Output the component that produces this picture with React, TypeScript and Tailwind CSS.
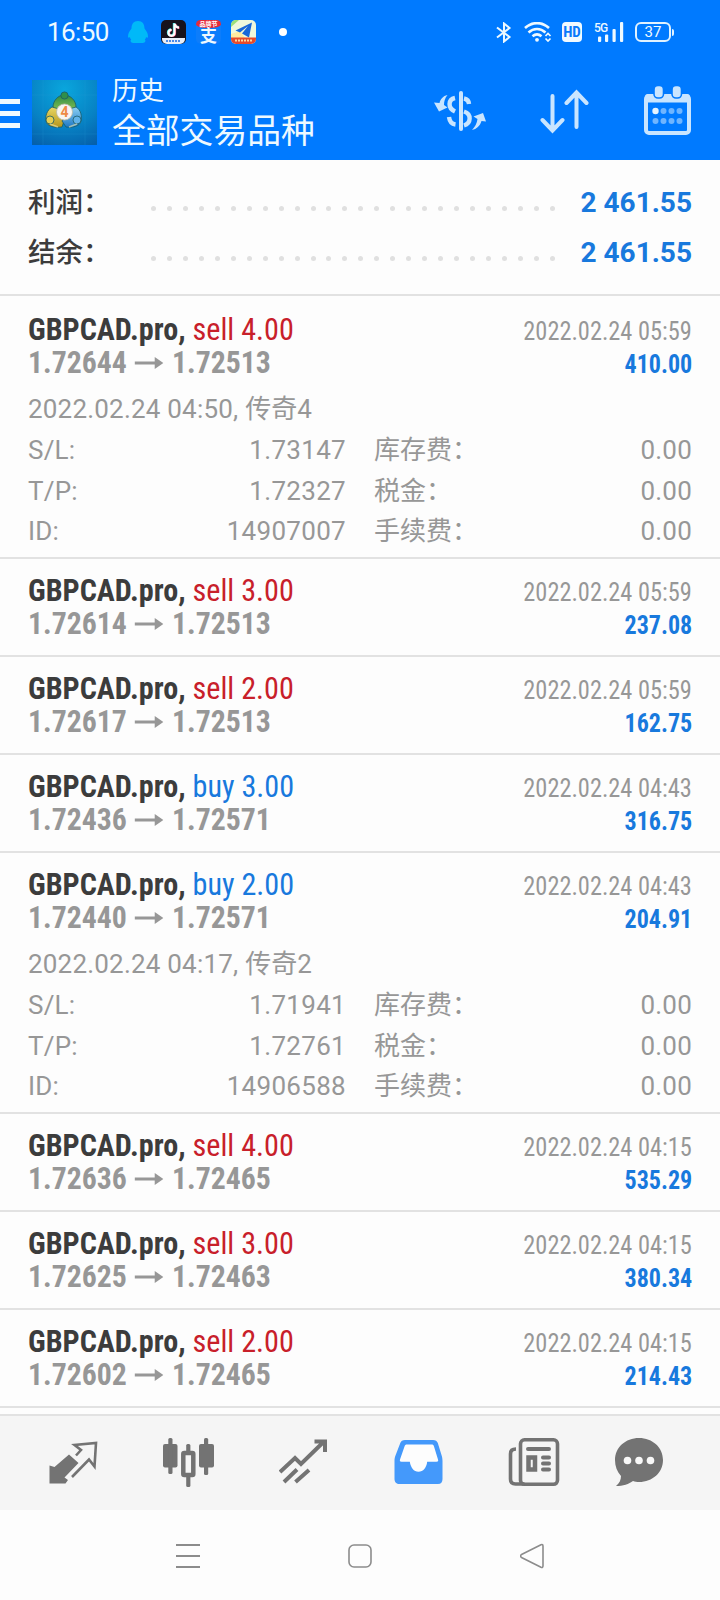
import React from "react";

interface Trade {
  side: "buy" | "sell";
  volume: string;
  open: string;
  close: string;
  time: string;
  profit: string;
  details?: {
    opened: string;
    comment: string;
    sl: string;
    tp: string;
    id: string;
  };
}

const trades: Trade[] = [
  {
    side: "sell",
    volume: "4.00",
    open: "1.72644",
    close: "1.72513",
    time: "2022.02.24 05:59",
    profit: "410.00",
    details: { opened: "2022.02.24 04:50,", comment: "传奇4", sl: "1.73147", tp: "1.72327", id: "14907007" },
  },
  { side: "sell", volume: "3.00", open: "1.72614", close: "1.72513", time: "2022.02.24 05:59", profit: "237.08" },
  { side: "sell", volume: "2.00", open: "1.72617", close: "1.72513", time: "2022.02.24 05:59", profit: "162.75" },
  { side: "buy", volume: "3.00", open: "1.72436", close: "1.72571", time: "2022.02.24 04:43", profit: "316.75" },
  {
    side: "buy",
    volume: "2.00",
    open: "1.72440",
    close: "1.72571",
    time: "2022.02.24 04:43",
    profit: "204.91",
    details: { opened: "2022.02.24 04:17,", comment: "传奇2", sl: "1.71941", tp: "1.72761", id: "14906588" },
  },
  { side: "sell", volume: "4.00", open: "1.72636", close: "1.72465", time: "2022.02.24 04:15", profit: "535.29" },
  { side: "sell", volume: "3.00", open: "1.72625", close: "1.72463", time: "2022.02.24 04:15", profit: "380.34" },
  { side: "sell", volume: "2.00", open: "1.72602", close: "1.72465", time: "2022.02.24 04:15", profit: "214.43" },
];

function StatusBar() {
  return (
    <div className="flex h-16 items-center justify-between pl-[47px] pr-[46px] text-[#eef9ff]">
      <div className="flex items-center">
        <span className="w-[81px] text-[26px] leading-8 tracking-[-0.6px]">16:50</span>
        {/* QQ */}
        <svg width="20" height="22" viewBox="0 0 20 22" className="block" fill="#00b9f8">
          <path d="M10 0C5.500 0 3.500 3 3.500 7.500C1.500 10 0 12.500 0 15.500c0 1.500 1 1.500 2 .5c0 1 .5 2 1.200 2.600c-1.200.8-.8 3.400 2 3.400h9.600c2.800 0 3.200-2.600 2-3.400c.7-.6 1.200-1.600 1.200-2.600c1 1 2 1 2-.5c0-3-1.500-5.500-3.500-8C16.500 3 14.500 0 10 0z" />
        </svg>
        {/* TikTok */}
        <svg width="25" height="24" viewBox="0 0 25 24" className="ml-[13px] block">
          <rect width="25" height="24" rx="5" fill="#17121c" />
          <path d="M1 18h23v1a5 5 0 0 1-5 5H6a5 5 0 0 1-5-5z" fill="#e8eef8" />
          <path d="M5 21h15" stroke="#4d8be8" strokeWidth="2" strokeDasharray="2 1" />
          <path d="M13 3v9.500a3 3 0 1 1-3-3M13 3.500c.5 2.500 2 3.600 4.500 3.800" fill="none" stroke="#2de6e2" strokeWidth="2.400" />
          <path d="M14 4v9a3 3 0 1 1-3-3M14 4c.5 2.500 2 3.600 4.500 3.800" fill="none" stroke="#f8406a" strokeWidth="2.200" />
          <path d="M13.500 3.500v9.300a3 3 0 1 1-3-3M13.500 3.800c.5 2.500 2 3.600 4.500 3.800" fill="none" stroke="#fff" strokeWidth="2.200" />
        </svg>
        {/* Alipay */}
        <span className="ml-[10px] flex h-6 w-[25px] flex-col items-center rounded-[5px] bg-[#0d7dfb]">
          <span className="h-[8px] w-full rounded-t-[5px] rounded-b-[50%] bg-[#e52b3c] text-center text-[6px] font-bold leading-[8px] text-white">
            品牌节
          </span>
          <span className="text-[17px] font-bold leading-[16px]">支</span>
        </span>
        {/* Maps */}
        <svg width="25" height="24" viewBox="0 0 25 24" className="ml-[10px] block">
          <rect width="25" height="24" rx="5" fill="#eef8dc" />
          <path d="M0 7L8 0H5a5 5 0 0 0-5 5z" fill="#9be07a" />
          <path d="M0 14l9-3 5 7H0z" fill="#ffe9a0" />
          <path d="M21 2.500L4.500 10.500l4.500 2L17 6l-6 7.500 7 4z" fill="#1767d8" />
          <path d="M0 17.500h25V19a5 5 0 0 1-5 5H5a5 5 0 0 1-5-5z" fill="#e54a2c" />
          <path d="M4 20.500h17" stroke="#fbd9a0" strokeWidth="2" strokeDasharray="2 1" />
        </svg>
        <span className="ml-[23px] size-2 rounded-full bg-white" />
      </div>

      <div className="flex items-center">
        <svg width="16" height="21" viewBox="0 0 16 21" className="block" fill="none" stroke="currentColor" strokeWidth="2">
          <path d="M1 5.500l12.500 9.500L8 19.500v-18L13.500 6L1 15.500" />
        </svg>
        <svg width="28" height="20" viewBox="0 0 28 20" className="ml-[12px] block" fill="none" stroke="currentColor">
          <path d="M1 6C8-.5 18-.5 25 6M4.500 10.500c5-4.700 12-4.700 17 0M8.500 14.300c3-2.600 6-2.600 9 0" strokeWidth="2.600" />
          <circle cx="13" cy="17.800" r="1.900" fill="currentColor" stroke="none" />
          <path d="M21.500 14l2.500-2.500 2.500 2.500M21.500 16.500l2.500 2.500 2.500-2.500" strokeWidth="1.700" />
        </svg>
        <span className="ml-[10px] h-5 w-5 rounded-[4px] bg-[#f2faff] text-center font-['Roboto_Condensed',Roboto,sans-serif] text-[15px] font-bold leading-5 text-[#0a79fb]">
          HD
        </span>
        <span className="relative ml-[12px] h-5 w-[30px]">
          <span className="absolute left-0 top-0 text-[12px] font-medium leading-3 tracking-[-0.8px]">5G</span>
          <svg width="30" height="20" viewBox="0 0 30 20" className="block" fill="currentColor">
            <rect x="4" y="14.500" width="3.200" height="5.500" rx="1" />
            <rect x="11" y="12.500" width="3.200" height="7.500" rx="1" />
            <rect x="18.500" y="7" width="3.200" height="13" rx="1" />
            <rect x="26" y="0" width="3.200" height="20" rx="1" />
          </svg>
        </span>
        <span className="ml-[11px] flex h-5 w-[36px] items-center justify-center rounded-[6px] border-2 border-[#e0f2ff] text-[15px] leading-4">
          37
        </span>
        <span className="ml-px h-[7px] w-[2px] rounded-r bg-[#e0f2ff]" />
      </div>
    </div>
  );
}

function AppLogo() {
  return (
    <svg width="65" height="65" viewBox="0 0 65 65" className="block">
      <defs>
        <radialGradient id="logoBg" cx="0.5" cy="0.15" r="0.95">
          <stop offset="0" stopColor="#0aa6dd" />
          <stop offset="0.6" stopColor="#0782c4" />
          <stop offset="1" stopColor="#0560ab" />
        </radialGradient>
        <linearGradient id="logoGreen" x1="0" y1="0" x2="0" y2="1">
          <stop offset="0" stopColor="#2c8a45" />
          <stop offset="1" stopColor="#8cc653" />
        </linearGradient>
        <linearGradient id="logoYellow" x1="0" y1="0" x2="0" y2="1">
          <stop offset="0" stopColor="#e8d665" />
          <stop offset="1" stopColor="#b5961c" />
        </linearGradient>
        <linearGradient id="logoBlue" x1="0" y1="0" x2="0" y2="1">
          <stop offset="0" stopColor="#8dd0f4" />
          <stop offset="1" stopColor="#1d78c4" />
        </linearGradient>
      </defs>
      <rect width="65" height="65" fill="url(#logoBg)" />
      <path d="M11 0v65M53 0v65M0 15h65M0 54h65" stroke="#2b9fd8" strokeWidth="0.700" opacity="0.300" />
      <g stroke="#1b5c66" strokeWidth="0.800">
        <path d="M32 15c-6 0-11 6-11 12l6 5h11l6-5c0-6-5-12-12-12z" fill="url(#logoGreen)" />
        <path d="M20 27c-5 3-7 9-6 14c1 5 7 7 16 6l2-6-5-12z" fill="url(#logoYellow)" />
        <path d="M44 27c5 3 6 9 5 14c-1 5-8 7-15 6l-4-6 7-12z" fill="url(#logoBlue)" />
        <circle cx="32.500" cy="15.500" r="3.600" fill="#2f8f4a" />
        <circle cx="18" cy="40" r="4" fill="#e6cf52" />
        <circle cx="45" cy="40" r="4" fill="#5fb2ea" />
      </g>
      <path d="M18 44l8 3M45 44l-8 3" stroke="#f3ebb0" strokeWidth="1.500" opacity="0.600" />
      <circle cx="32.500" cy="32" r="8" fill="#f7f5f2" stroke="#b9b9a6" strokeWidth="0.800" />
      <text x="32.500" y="37" textAnchor="middle" fontSize="14" fontWeight="700" fill="#ee8a45" fontFamily="Roboto, sans-serif">
        4
      </text>
    </svg>
  );
}

function Header() {
  return (
    <div className="flex h-24 items-start text-[#eef9ff]">
      <svg width="20" height="30" viewBox="0 0 20 30" className="mt-[35px] block" fill="currentColor">
        <rect y="0" width="20" height="5" />
        <rect y="12" width="20" height="5" />
        <rect y="24" width="20" height="5" />
      </svg>
      <div className="ml-3 mt-4">
        <AppLogo />
      </div>
      <div className="ml-[15px] mt-[9px] flex-1">
        <div className="text-[26px] leading-[36px]">历史</div>
        <div className="text-[33.8px] leading-[46px]">全部交易品种</div>
      </div>
      <div className="mr-[29px] mt-[22px] flex items-start text-[#c9e5ff]">
        <svg width="54" height="50" viewBox="0 0 54 50" className="block" fill="none" stroke="currentColor">
          <path d="M28 7v36" strokeWidth="4" strokeLinecap="round" />
          <path d="M22 12c-7 1.500-7.500 10 0 13.500M31 12.500c3 .6 4.800 2.500 5 5.500M31 25.500c8 2.500 7 12 0 14M22.500 38.500c-4-.5-6-3.500-6.500-7.500" strokeWidth="4.400" />
          <path d="M14.500 9C10 10 7.500 13 6.500 17l-5.500-.5L6 25.500l8.500-4-3.500-2.500C11 15 12 12 14.500 9z" fill="currentColor" stroke="none" />
          <path d="M39 44c4.500-1 8-4 9.500-9l4.500.5L50 27l-9.500 3.500 4 2.500C44 37 42 41 39 44z" fill="currentColor" stroke="none" />
        </svg>
        <svg width="50" height="50" viewBox="0 0 50 50" className="ml-[53px] block" fill="none" stroke="currentColor" strokeWidth="4" strokeLinecap="round">
          <path d="M12.500 10v34M2.500 34l10 10.500 10-10.500M36.500 41V7M26.500 17l10-10.500 10 10.500" />
        </svg>
        <svg width="47" height="50" viewBox="0 0 47 50" className="ml-[54px] block">
          <rect x="2" y="10" width="43" height="37" rx="3" fill="none" stroke="currentColor" strokeWidth="4" />
          <rect x="1" y="8" width="45" height="8.500" rx="3" fill="currentColor" />
          <rect x="10" y="-0.500" width="9.500" height="12.500" rx="4" fill="currentColor" stroke="#007aff" strokeWidth="1.600" />
          <rect x="28" y="-0.500" width="9.500" height="12.500" rx="4" fill="currentColor" stroke="#007aff" strokeWidth="1.600" />
          <circle cx="11.500" cy="25" r="3.200" fill="#e4f3ff" />
          <g fill="#6fb5ff">
            <circle cx="19.500" cy="25" r="3" />
            <circle cx="27.500" cy="25" r="3" />
            <circle cx="35.500" cy="25" r="3" />
            <circle cx="11.500" cy="35" r="3" />
            <circle cx="19.500" cy="35" r="3" />
            <circle cx="27.500" cy="35" r="3" />
            <circle cx="35.500" cy="35" r="3" />
          </g>
        </svg>
      </div>
    </div>
  );
}

function SummaryRow({ label, value }: { label: string; value: string }) {
  return (
    <div className="flex h-[50px] items-center">
      <span className="w-[122px] text-[27.5px] font-medium leading-[50px] text-[#3c3c3c]">{label}</span>
      <span className="mt-[10px] flex w-[405px] justify-between pl-px">
        {Array.from({ length: 26 }, (_, i) => (
          <span key={i} className="size-[5px] rounded-full bg-[#e0e0e0]" />
        ))}
      </span>
      <span className="flex-1 text-right text-[28px] font-bold leading-[50px] text-[#1879dd]">{value}</span>
    </div>
  );
}

function DetailRow({ label, value, label2 }: { label: string; value: string; label2: string }) {
  return (
    <div className="flex h-[40.5px] text-[26px] leading-[40.5px]">
      <span className="w-[120px] tracking-[0.2px]">{label}</span>
      <span className="w-[198px] text-right tracking-[0.3px]">{value}</span>
      <span className="ml-[28px] flex-1">{label2}</span>
      <span className="tracking-[0.2px]">0.00</span>
    </div>
  );
}

function TradeRow({ trade }: { trade: Trade }) {
  const { details } = trade;
  return (
    <div
      className={`border-b-2 border-[#e2e2e2] px-7 pt-3.5 text-[#979797] first:h-[263px] first:pt-4 ${
        details ? "h-[261px]" : "h-[98px]"
      }`}
    >
      <div className="flex h-[34px] items-baseline justify-between font-['Roboto_Condensed',Roboto,sans-serif] leading-[34px]">
        <span className="origin-left scale-x-[0.942] whitespace-pre text-[32px]">
          <span className="font-bold text-[#3c3c3c]">GBPCAD.pro, </span>
          <span className={trade.side === "sell" ? "text-[#c8202a]" : "text-[#1879dd]"}>
            {trade.side} {trade.volume}
          </span>
        </span>
        <span className="origin-right scale-x-[0.937] text-[26px]">{trade.time}</span>
      </div>
      <div className="flex h-[34px] items-baseline justify-between font-['Roboto_Condensed',Roboto,sans-serif] font-bold leading-[34px]">
        <span className="flex origin-left scale-x-[0.96] items-baseline text-[31px]">
          {trade.open}
          <svg width="30" height="12" viewBox="0 0 30 12" className="ml-[8px] mr-[9px] block self-center" fill="currentColor">
            <path d="M0 4.500h21V0l9 6-9 6V7.500H0z" />
          </svg>
          {trade.close}
        </span>
        <span className="origin-right scale-x-[0.925] text-[26px] text-[#1879dd]">{trade.profit}</span>
      </div>
      {details && (
        <div className="pt-2">
          <div className="flex h-[42px] gap-[7px] text-[26px] leading-[42px]">
            <span className="tracking-[0.2px]">{details.opened}</span>
            <span>{details.comment}</span>
          </div>
          <DetailRow label="S/L:" value={details.sl} label2="库存费：" />
          <DetailRow label="T/P:" value={details.tp} label2="税金：" />
          <DetailRow label="ID:" value={details.id} label2="手续费：" />
        </div>
      )}
    </div>
  );
}

function TabBar() {
  return (
    <div className="flex h-[96px] items-start border-t-2 border-[#e2e2e2] bg-[#f5f5f5] pl-[48px] pt-[20px] text-[#737373]">
      <svg width="52" height="52" viewBox="0 0 52 52" className="block" fill="none" stroke="currentColor">
        <path d="M21 18.500l9.500 8.500-14 14.500 3.500 2.500-2.500 3.500H1.500V29.500l5 1.500z" fill="currentColor" stroke="none" />
        <path d="M28 19.500l5-5.500-6.500-5L48 7l-1.500 23.500-5.500-7L24 41" strokeWidth="2.600" />
      </svg>
      <svg width="52" height="52" viewBox="0 0 52 52" className="ml-[63px] block" fill="currentColor">
        <rect x="0" y="8" width="14.500" height="23.500" rx="2" />
        <rect x="5.300" y="2" width="4.200" height="36" rx="1.500" />
        <rect x="36" y="8" width="15" height="23.500" rx="2" />
        <rect x="41" y="2" width="4.200" height="37" rx="1.500" />
        <rect x="23.200" y="8" width="4.200" height="43" rx="1.500" />
        <rect x="20.300" y="17" width="10" height="22" rx="1" fill="#f5f5f5" stroke="currentColor" strokeWidth="4.500" />
      </svg>
      <svg width="50" height="52" viewBox="0 0 50 52" className="ml-[64px] block" fill="none" stroke="currentColor" strokeWidth="4">
        <path d="M1 36l15-14 6 6L44 6.500M35.500 5.500H46V16M5 46l13-12.500M16.500 46l13.500-12" />
      </svg>
      <svg width="50" height="52" viewBox="0 0 50 52" className="ml-[64.500px] block">
        <path
          fill="#4499fb"
          d="M11 4h28c2.500 0 4 1 4.800 3l4 13c.5 2 .7 3 .7 5v18c0 3-1.500 5-4.500 5H5.500c-3 0-5-2-5-5V25c0-2 .2-3 .8-5l5-13C7 5 8.500 4 11 4z"
        />
        <path d="M13 8.500c-1.500 0-2 .5-2.500 2L6 23.500c-.4 1.500 0 2.200 1.500 2.200h8.300c1 6 4 10 8.700 10s8-4 8.700-10h9.300c1.500 0 2-.7 1.500-2.200L40 10.500c-.4-1.500-1-2-2.500-2z" fill="#fdfdfd" />
      </svg>
      <svg width="52" height="52" viewBox="0 0 52 52" className="ml-[64px] block" fill="none" stroke="currentColor" strokeWidth="3.600">
        <rect x="12.500" y="3.800" width="37" height="44.500" rx="4" />
        <path d="M8 13C4 13 2.500 14.500 2.500 18v25c0 3.500 1.500 5 5 5h9" strokeLinejoin="round" />
        <path d="M20 13h21M35 21.500h6M35 27.500h6M35 33.500h6" strokeWidth="4" strokeLinecap="round" />
        <rect x="20.500" y="21.500" width="6.500" height="12" strokeWidth="4.500" />
      </svg>
      <svg width="50" height="52" viewBox="0 0 50 52" className="ml-[54.500px] block">
        <path d="M25 2c13.500 0 24 9.500 24 22S38.500 46 25 46c-2.200 0-4-.3-6-1c-4 3-10 5-17 5c3.500-3 5-6 5-10C3 35.500 1 30.500 1 24C1 11.500 11.500 2 25 2z" fill="currentColor" />
        <g fill="#f8f8f8">
          <circle cx="13.500" cy="24.500" r="3.800" />
          <circle cx="25" cy="24.500" r="3.800" />
          <circle cx="36.500" cy="24.500" r="3.800" />
        </g>
      </svg>
    </div>
  );
}

function NavBar() {
  return (
    <div className="flex h-[90px] items-start pl-[176px] pt-[33px] text-[#8c8c8c]">
      <svg width="24" height="26" viewBox="0 0 24 26" className="block" stroke="currentColor" strokeWidth="2">
        <path d="M0 2h24M0 13h24M0 24h24" />
      </svg>
      <svg width="26" height="26" viewBox="0 0 26 26" className="ml-[147px] block" fill="none" stroke="currentColor" strokeWidth="1.600">
        <rect x="2" y="2" width="22" height="22" rx="5" />
      </svg>
      <svg width="24" height="26" viewBox="0 0 24 26" className="ml-[147px] block" fill="none" stroke="currentColor" strokeWidth="1.600" strokeLinejoin="round">
        <path d="M1.500 11.500L21 1.800q2-.8 2 1.400v19.600q0 2.200-2 1.400L1.500 14.500q-1.800-1.500 0-3z" />
      </svg>
    </div>
  );
}

export default function App() {
  return (
    <div className="flex h-[1600px] w-[720px] flex-col overflow-hidden bg-[#fdfdfd] font-['Roboto','Noto_Sans_CJK_SC',sans-serif]">
      <div className="h-40 bg-[#007aff]">
        <StatusBar />
        <Header />
      </div>
      <div className="h-[136px] border-b-2 border-[#e2e2e2] px-7 pt-[18px]">
        <SummaryRow label="利润：" value="2 461.55" />
        <SummaryRow label="结余：" value="2 461.55" />
      </div>
      <div className="h-[1118px]">
        {trades.map((trade) => (
          <TradeRow key={`${trade.open}-${trade.volume}`} trade={trade} />
        ))}
      </div>
      <TabBar />
      <NavBar />
    </div>
  );
}
